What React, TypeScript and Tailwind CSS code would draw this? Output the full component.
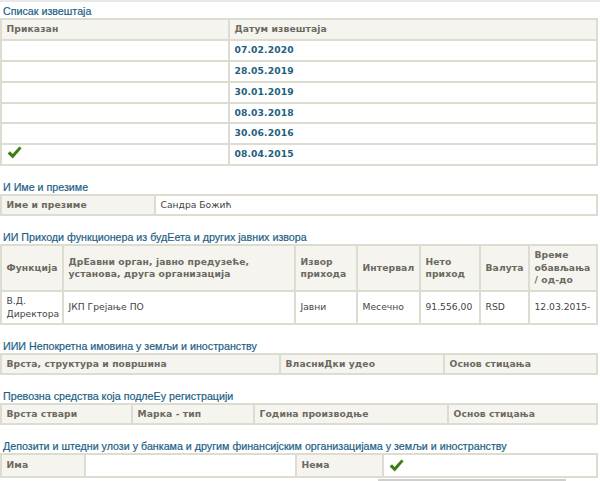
import React from "react";

const cell = "border-2 border-[#dddcd0] px-[4.5px] text-left align-middle text-[9.2px] leading-[12.5px]";
const th = `${cell} bg-[#f5f4ef] font-bold tracking-[0.1px] text-[#6b6960]`;
const td = `${cell} bg-white font-normal text-[#444444]`;
const dateCell = `${cell} bg-white font-bold tracking-[0.1px] text-[#1f5f80]`;
const heading = "h-[13px] pl-[3px] font-['Liberation_Sans',Arial,sans-serif] text-[10.7px] font-normal leading-[13px] text-[#1d5f86] [-webkit-text-stroke:0.2px_#1d5f86]";
const tableBase = "w-[598px] table-fixed border-collapse font-['DejaVu_Sans',Verdana,sans-serif]";

const DATES = ["07.02.2020", "28.05.2019", "30.01.2019", "08.03.2018", "30.06.2016"];

function Check({ className }: { className?: string }) {
  return (
    <svg width="15" height="13" viewBox="0 0 15 13" className={`block ${className ?? ""}`} aria-hidden="true">
      <path d="M0.6 7.4 L3 5.2 L5.6 8 L12.4 0.6 L14.6 2.2 L5.8 12.6 Z" fill="#3f7d14" />
    </svg>
  );
}

export default function App() {
  return (
    <div className="relative h-[481px] w-[600px] overflow-hidden bg-white">
      <div className="h-[2px] bg-[#e8e8e8]" />
      <section className="mt-[3px]">
        <h2 className={heading}>Списак извештаја</h2>
        <table className={tableBase}>
          <thead>
            <tr className="h-[21px]">
              <th className={`${th} w-[228px]`}>Приказан</th>
              <th className={th}>Датум извештаја</th>
            </tr>
          </thead>
          <tbody>
            {DATES.map((d) => (
              <tr key={d} className={d === "08.03.2018" ? "h-[20px]" : "h-[21px]"}>
                <td className={td} />
                <td className={dateCell}>{d}</td>
              </tr>
            ))}
            <tr className="h-[21px]">
              <td className={td}><Check className="mb-[5px]" /></td>
              <td className={dateCell}>08.04.2015</td>
            </tr>
          </tbody>
        </table>
      </section>

      <section className="mt-[15px]">
        <h2 className={heading}>И Име и презиме</h2>
        <table className={tableBase}>
          <tbody>
            <tr className="h-[20px]">
              <th className={`${th} w-[154px]`}>Име и презиме</th>
              <td className={td}>Сандра Божић</td>
            </tr>
          </tbody>
        </table>
      </section>

      <section className="mt-[15px]">
        <h2 className={heading}>ИИ Приходи функционера из будЕета и других јавних извора</h2>
        <table className={tableBase}>
          <thead>
            <tr className="h-[46px]">
              <th className={`${th} w-[62px]`}>Функција</th>
              <th className={`${th} w-[232px]`}>ДрЕавни орган, јавно предузеће, установа, друга организација</th>
              <th className={`${th} w-[62px]`}>Извор прихода</th>
              <th className={`${th} w-[63px]`}>Интервал</th>
              <th className={`${th} w-[60px]`}>Нето приход</th>
              <th className={`${th} w-[49px]`}>Валута</th>
              <th className={th}>Време обављања / од-до</th>
            </tr>
          </thead>
          <tbody>
            <tr className="h-[33px]">
              <td className={td}>В.Д. Директора</td>
              <td className={td}>ЈКП Грејање ПО</td>
              <td className={td}>Јавни</td>
              <td className={td}>Месечно</td>
              <td className={td}>91.556,00</td>
              <td className={td}>RSD</td>
              <td className={td}>12.03.2015-</td>
            </tr>
          </tbody>
        </table>
      </section>

      <section className="mt-[15px]">
        <h2 className={heading}>ИИИ Непокретна имовина у земљи и иностранству</h2>
        <table className={tableBase}>
          <thead>
            <tr className="h-[20px]">
              <th className={`${th} w-[279px]`}>Врста, структура и површина</th>
              <th className={`${th} w-[164px]`}>ВласниДки удео</th>
              <th className={th}>Основ стицања</th>
            </tr>
          </thead>
        </table>
      </section>

      <section className="mt-[15px]">
        <h2 className={heading}>Превозна средства која подлеЕу регистрацији</h2>
        <table className={tableBase}>
          <thead>
            <tr className="h-[20px]">
              <th className={`${th} w-[131px]`}>Врста ствари</th>
              <th className={`${th} w-[122px]`}>Марка - тип</th>
              <th className={`${th} w-[194px]`}>Година производње</th>
              <th className={th}>Основ стицања</th>
            </tr>
          </thead>
        </table>
      </section>

      <section className="mt-[15px]">
        <h2 className={heading}>Депозити и штедни улози у банкама и другим финансијским организацијама у земљи и иностранству</h2>
        <table className={tableBase}>
          <tbody>
            <tr className="h-[23px]">
              <th className={`${th} w-[84px]`}>Има</th>
              <td className={`${td} w-[211px]`} />
              <th className={`${th} w-[87px]`}>Нема</th>
              <td className={td}><Check /></td>
            </tr>
          </tbody>
        </table>
      </section>

      <div className="absolute bottom-0 left-[378px] h-[2px] w-[188px] bg-[#cfcfcf]" />
    </div>
  );
}
